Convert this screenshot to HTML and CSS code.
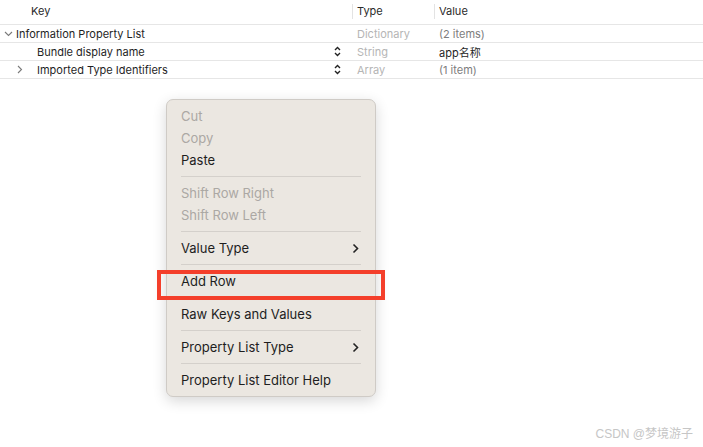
FILE: index.html
```html
<!DOCTYPE html>
<html>
<head>
<meta charset="utf-8">
<link rel="stylesheet" href="styles.css">
</head>
<body>
<div class="table">
  <div class="header">
    <div class="col key"><span class="htext">Key</span></div>
    <div class="col type"><span>Type</span></div>
    <div class="col value"><span>Value</span></div>
  </div>
  <div class="row">
    <div class="col key lvl0">
      <svg class="disc" width="9" height="6" viewBox="0 0 9 6"><path d="M1 1 L4.5 4.5 L8 1" fill="none" stroke="#7a7a7a" stroke-width="1.1"/></svg>
      <span>Information Property List</span>
    </div>
    <div class="col type dim">Dictionary</div>
    <div class="col value gray">(2 items)</div>
  </div>
  <div class="row">
    <div class="col key lvl1">
      <span class="grow">Bundle display name</span>
      <svg class="stepper" width="7" height="11" viewBox="0 0 7 11"><path d="M1 4 L3.5 1.5 L6 4 M1 7 L3.5 9.5 L6 7" fill="none" stroke="#222" stroke-width="1.4"/></svg>
    </div>
    <div class="col type dim">String</div>
    <div class="col value">app名称</div>
  </div>
  <div class="row">
    <div class="col key lvl1 has-disc">
      <svg class="disc2" width="6" height="9" viewBox="0 0 6 9"><path d="M1 1 L4.5 4.5 L1 8" fill="none" stroke="#7a7a7a" stroke-width="1.1"/></svg>
      <span class="grow">Imported Type Identifiers</span>
      <svg class="stepper" width="7" height="11" viewBox="0 0 7 11"><path d="M1 4 L3.5 1.5 L6 4 M1 7 L3.5 9.5 L6 7" fill="none" stroke="#222" stroke-width="1.4"/></svg>
    </div>
    <div class="col type dim">Array</div>
    <div class="col value gray">(1 item)</div>
  </div>
</div>

<div class="menu">
  <div class="item disabled">Cut</div>
  <div class="item disabled">Copy</div>
  <div class="item">Paste</div>
  <div class="sep"></div>
  <div class="item disabled">Shift Row Right</div>
  <div class="item disabled">Shift Row Left</div>
  <div class="sep"></div>
  <div class="item sub"><span>Value Type</span><svg width="7" height="11" viewBox="0 0 7 11"><path d="M1.5 1.5 L5.5 5.5 L1.5 9.5" fill="none" stroke="#222" stroke-width="1.6"/></svg></div>
  <div class="sep"></div>
  <div class="item">Add Row</div>
  <div class="sep"></div>
  <div class="item">Raw Keys and Values</div>
  <div class="sep"></div>
  <div class="item sub"><span>Property List Type</span><svg width="7" height="11" viewBox="0 0 7 11"><path d="M1.5 1.5 L5.5 5.5 L1.5 9.5" fill="none" stroke="#222" stroke-width="1.6"/></svg></div>
  <div class="sep"></div>
  <div class="item">Property List Editor Help</div>
</div>

<div class="highlight"></div>

<div class="watermark">CSDN @梦境游子</div>
</body>
</html>
```

FILE: styles.css
```css
html, body {
  margin: 0;
  padding: 0;
  width: 703px;
  height: 447px;
  background: #ffffff;
  overflow: hidden;
  font-family: Inter, "Noto Sans CJK SC", sans-serif;
  color: #1f1f1f;
}
.table {
  display: flex;
  flex-direction: column;
  font-size: 11px;
}
.header {
  display: flex;
  height: 25px;
  align-items: center;
  border-bottom: 1px solid #e6e6e6;
  box-sizing: border-box;
  color: #2a2a2a;
  padding-bottom: 2px;
}
.header .col {
  height: 15px;
  display: flex;
  align-items: center;
}
.header .type, .header .value {
  border-left: 1px solid #e3e3e3;
}
.col.key { width: 352px; box-sizing: border-box; }
.col.type { width: 82px; box-sizing: border-box; padding-left: 4px; }
.col.value { flex: 1; padding-left: 4px; }
.header .key { padding-left: 31px; }
.row {
  display: flex;
  height: 18px;
  align-items: center;
  border-bottom: 1px solid #e6e6e6;
  box-sizing: border-box;
}
.row .col.type { padding-left: 5px; }
.row .col.value { padding-left: 5px; }
.row .col.key {
  display: flex;
  align-items: center;
}
.lvl0 { padding-left: 4px; }
.lvl0 .disc { margin-right: 3px; }
.lvl1 { padding-left: 37px; padding-right: 10px; }
.lvl1.has-disc { padding-left: 17px; }
.disc2 { margin-right: 14px; }
.grow { flex: 1; }
.stepper { margin-right: 1px; }
.dim { color: #b5b5b5; }
.gray { color: #7d7d7d; }

.menu {
  position: absolute;
  left: 166px;
  top: 99px;
  width: 210px;
  height: 298px;
  box-sizing: border-box;
  padding: 5px 0 5px;
  background: #ebe7e1;
  border: 1px solid #cfcbc6;
  border-radius: 7px;
  box-shadow: 0 4px 14px rgba(0,0,0,0.16);
  font-size: 13px;
  display: flex;
  flex-direction: column;
}
.item {
  height: 22px;
  flex-shrink: 0;
  display: flex;
  align-items: center;
  justify-content: space-between;
  padding: 0 16px 0 14px;
  color: #1e1e1e;
}
.item.disabled { color: #aba8a4; }
.sep {
  height: 1px;
  flex-shrink: 0;
  margin: 5px 14px 5px 14px;
  background: #d4d0cb;
}
.highlight {
  position: absolute;
  left: 157px;
  top: 270px;
  width: 228px;
  height: 30px;
  box-sizing: border-box;
  border: 4px solid #f43f2b;
}
.watermark {
  position: absolute;
  right: 10px;
  bottom: 6px;
  font-size: 12px;
  color: #c6c6c6;
  font-family: "Liberation Sans", "Noto Sans CJK SC", sans-serif;
}
```
